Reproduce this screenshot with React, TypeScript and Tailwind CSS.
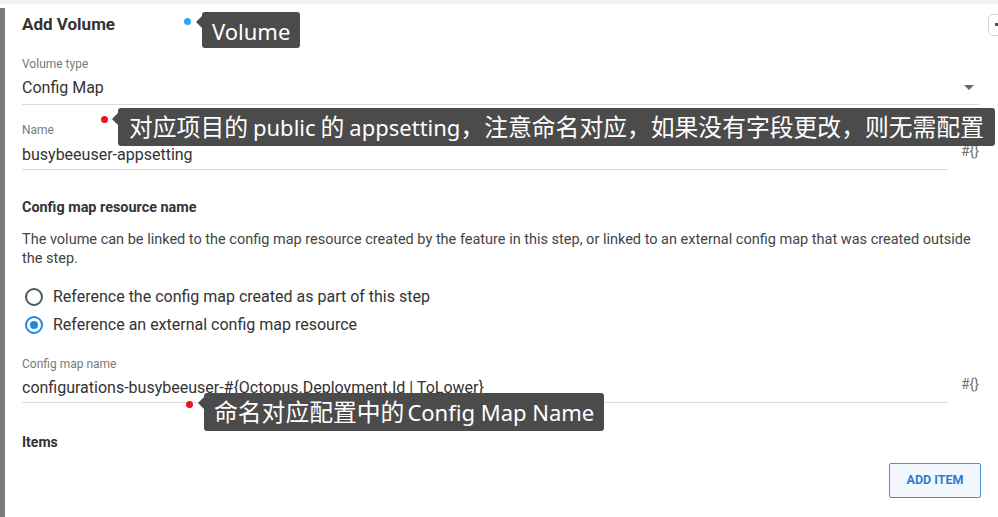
import React from "react";

const Tip = ({
  children,
  className,
  arrowTop,
}: {
  children: React.ReactNode;
  className: string;
  arrowTop: string;
}) => (
  <div
    className={`absolute bg-[#4b4b4b] rounded-[3px] text-white text-[23.8px] leading-[38px] whitespace-nowrap font-['Noto_Sans','Noto_Sans_CJK_SC',sans-serif] ${className}`}
  >
    <span
      className={`absolute left-[-6px] w-0 h-0 border-y-[6px] border-y-transparent border-r-[6px] border-r-[#4b4b4b] ${arrowTop}`}
    />
    {children}
  </div>
);

const L = ({ children, className = "mx-[5px]" }: { children: React.ReactNode; className?: string }) => (
  <span className={`text-[22px] ${className}`}>{children}</span>
);

const Dot = ({ className }: { className: string }) => (
  <span className={`absolute w-[7px] h-[7px] rounded-full ${className}`} />
);

const TextField = ({
  label,
  value,
  pb,
  gap,
  iconPt,
}: {
  label: string;
  value: string;
  pb: string;
  gap: string;
  iconPt: string;
}) => (
  <div className="flex items-start">
    <div className={`flex-1 border-b border-[#dcdcdc] ${pb}`}>
      <div className="text-[12px] leading-[14px] text-[#7a7a7a]">{label}</div>
      <div className={`text-[16px] leading-[20px] text-[#333] ${gap}`}>{value}</div>
    </div>
    <div className={`w-[32px] flex justify-end pr-[1px] text-[14px] leading-[16px] text-[#6f6f6f] ${iconPt}`}>
      #{"{}"}
    </div>
  </div>
);

const Radio = ({ checked, label }: { checked?: boolean; label: string }) => (
  <label className="flex items-center h-[28px]">
    <span
      className={`w-[18px] h-[18px] ml-[3px] rounded-full border-2 flex items-center justify-center ${
        checked ? "border-[#1f86e0]" : "border-[#4a5963]"
      }`}
    >
      {checked && <span className="w-[8px] h-[8px] rounded-full bg-[#1f86e0]" />}
    </span>
    <span className="ml-[10px] text-[16px] text-[#333]">{label}</span>
  </label>
);

export default function App() {
  return (
    <div className="relative w-[998px] h-[517px] overflow-hidden bg-white font-['Roboto',sans-serif]">
      <div className="h-[4px] bg-[#f3f3f3]" />
      <div className="flex h-[513px]">
        <div className="w-[5px] mt-[4px] bg-[#7b7b7b]" />
        <div className="flex-1 pl-[17px] pr-[18px]">
          <h2 className="mt-[10px] text-[17px] leading-[20px] font-bold text-[#333]">Add Volume</h2>

          <div className="mt-[23px] border-b border-[#dcdcdc] pb-[6px] flex items-end justify-between">
            <div>
              <div className="text-[12px] leading-[14px] text-[#7a7a7a]">Volume type</div>
              <div className="mt-[7px] text-[16px] leading-[20px] text-[#333]">Config Map</div>
            </div>
            <span className="mr-[6px] mb-[8px] w-0 h-0 border-x-[5px] border-x-transparent border-t-[5px] border-t-[#666]" />
          </div>

          <div className="mt-[18px]">
            <TextField
              label="Name"
              value="busybeeuser-appsetting"
              pb="pb-[4px]"
              gap="mt-[8px]"
              iconPt="pt-[20px]"
            />
          </div>

          <h3 className="mt-[30px] text-[14.4px] leading-[16px] font-bold text-[#333]">Config map resource name</h3>
          <p className="mt-[14px] text-[14.5px] leading-[19px] text-[#444]">
            The volume can be linked to the config map resource created by the feature in this step, or linked to an
            external config map that was created outside the step.
          </p>

          <div className="mt-[15px]">
            <Radio label="Reference the config map created as part of this step" />
            <Radio checked label="Reference an external config map resource" />
          </div>

          <div className="mt-[18px]">
            <TextField
              label="Config map name"
              value="configurations-busybeeuser-#{Octopus.Deployment.Id | ToLower}"
              pb="pb-[4px]"
              gap="mt-[7px]"
              iconPt="pt-[19px]"
            />
          </div>

          <h3 className="mt-[31px] text-[14px] leading-[16px] font-bold text-[#333]">Items</h3>

          <div className="mt-[13px] flex justify-end">
            <button className="w-[92px] h-[35px] mr-[-1px] border border-[#4a8fd8] bg-[#f2f7fd] rounded-[2px] text-[12.5px] font-bold text-[#2f7bd1]">
              ADD ITEM
            </button>
          </div>
        </div>
      </div>

      <div className="absolute left-[988px] top-[14px] w-[20px] h-[22px] rounded-[5px] border border-[#d6d6d6] bg-white">
        <span className="absolute left-[6px] top-[8px] w-[3px] h-[3px] bg-[#555]" />
      </div>

      <Dot className="left-[184px] top-[18px] bg-[#2ca6f0]" />
      <Tip className="left-[202px] top-[12px] h-[36px] leading-[36px] px-[10px]" arrowTop="top-[4px]">
        <span className="text-[22px]">Volume</span>
      </Tip>

      <Dot className="left-[101px] top-[116px] bg-[#f0131d]" />
      <Tip className="left-[118px] top-[108px] h-[38px] px-[11px]" arrowTop="top-[5px]">
        对应项目的<L>public</L>的<L className="ml-[5px]">appsetting</L>，注意命名对应，如果没有字段更改，则无需配置
      </Tip>

      <Dot className="left-[186px] top-[401px] bg-[#f0131d]" />
      <Tip className="left-[204px] top-[393px] h-[38px] px-[10px]" arrowTop="top-[4px]">
        命名对应配置中的<L className="ml-[3px]">Config Map Name</L>
      </Tip>
    </div>
  );
}
